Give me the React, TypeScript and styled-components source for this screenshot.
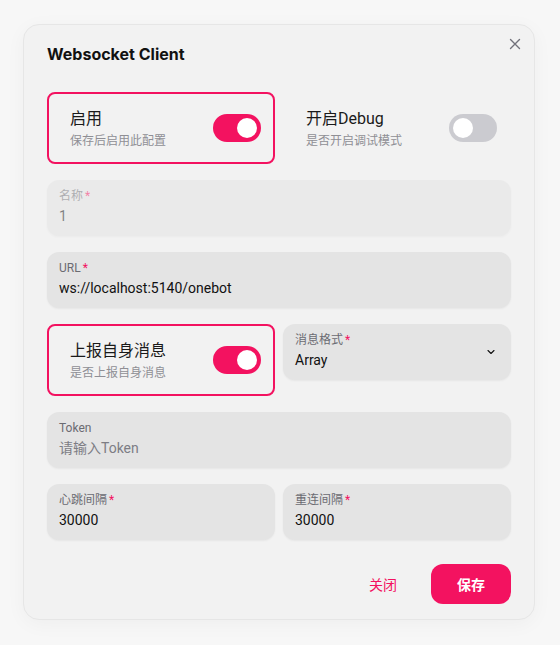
import React from 'react'
import styled, { createGlobalStyle } from 'styled-components'

const GlobalStyle = createGlobalStyle`
  body {
    margin: 0;
    background: #f7f7f7;
    font-family: Roboto, "Noto Sans CJK SC", sans-serif;
    color: #11181c;
  }
`

const Page = styled.div`
  display: flex;
  justify-content: center;
  align-items: flex-start;
  padding-top: 24px;
  min-height: 645px;
  box-sizing: border-box;
`

const Modal = styled.section`
  position: relative;
  width: 512px;
  background: #f2f2f2;
  border: 1px solid #e6e6e6;
  border-radius: 16px;
  box-shadow: 0 4px 20px rgba(0, 0, 0, 0.04);
  box-sizing: border-box;
  margin-left: -2px;
`

const Header = styled.header`
  padding: 15px 23px 16px;
  font-family: Inter, "Noto Sans CJK SC", sans-serif;
  font-size: 16px;
  line-height: 28px;
  font-weight: 700;
  color: #111;
`

const CloseButton = styled.button`
  position: absolute;
  top: 3px;
  right: 3px;
  width: 32px;
  height: 32px;
  display: flex;
  align-items: center;
  justify-content: center;
  border: none;
  background: transparent;
  color: #71717a;
  padding: 0;
`

const Body = styled.div`
  display: flex;
  flex-direction: column;
  gap: 16px;
  padding: 8px 23px;
`

const Row = styled.div`
  display: grid;
  grid-template-columns: 1fr 1fr;
  gap: 8px;
  align-items: start;
`

const SwitchCard = styled.div<{ $active?: boolean }>`
  display: flex;
  align-items: center;
  justify-content: space-between;
  height: 72px;
  box-sizing: border-box;
  padding: 0 12px 0 21px;
  border: 2px solid ${p => (p.$active ? '#f31260' : 'transparent')};
  border-radius: 8px;
`

const CardText = styled.div`
  display: flex;
  flex-direction: column;
  gap: 2px;
`

const CardTitle = styled.div`
  font-size: 16px;
  line-height: 24px;
  color: #1a1a1a;
`

const CardHint = styled.div`
  font-size: 12px;
  line-height: 16px;
  color: #8f8f95;
`

const Track = styled.div<{ $on?: boolean }>`
  width: 48px;
  height: 28px;
  border-radius: 14px;
  background: ${p => (p.$on ? '#f31260' : '#cbcbd0')};
  display: flex;
  align-items: center;
  justify-content: ${p => (p.$on ? 'flex-end' : 'flex-start')};
  padding: 0 4px;
  box-sizing: border-box;
`

const Thumb = styled.div`
  width: 20px;
  height: 20px;
  border-radius: 50%;
  background: #fff;
`

const Field = styled.div<{ $disabled?: boolean }>`
  position: relative;
  height: 56px;
  box-sizing: border-box;
  padding: 8px 12px 10px;
  display: flex;
  flex-direction: column;
  gap: 2px;
  border-radius: 12px;
  background: #e4e4e4;
  box-shadow: 0 1px 2px rgba(0, 0, 0, 0.05);
  opacity: ${p => (p.$disabled ? 0.5 : 1)};
`

const Label = styled.label`
  font-size: 12px;
  line-height: 16px;
  color: #6b6b72;
`

const Required = styled.span`
  color: #f31260;
  margin-left: 2px;
`

const Value = styled.div<{ $placeholder?: boolean }>`
  font-size: 14px;
  line-height: 20px;
  color: ${p => (p.$placeholder ? '#7d7d84' : '#111')};
`

const Chevron = styled.span`
  position: absolute;
  right: 14px;
  top: 50%;
  transform: translateY(-50%);
  display: flex;
  color: #111;
`

const Footer = styled.footer`
  display: flex;
  justify-content: flex-end;
  gap: 8px;
  padding: 16px 23px 15px;
`

const Button = styled.button<{ $solid?: boolean }>`
  min-width: 80px;
  height: 40px;
  border: none;
  border-radius: 12px;
  font-family: inherit;
  font-size: 14px;
  font-weight: ${p => (p.$solid ? 700 : 400)};
  background: ${p => (p.$solid ? '#f31260' : 'transparent')};
  color: ${p => (p.$solid ? '#fff' : '#f31260')};
`

const Toggle: React.FC<{ on?: boolean }> = ({ on }) => (
  <Track $on={on}>
    <Thumb />
  </Track>
)

interface InputProps {
  label: string
  value: string
  required?: boolean
  disabled?: boolean
  placeholder?: boolean
  select?: boolean
}

const Input: React.FC<InputProps> = props => (
  <Field $disabled={props.disabled}>
    <Label>
      {props.label}
      {props.required && <Required>*</Required>}
    </Label>
    <Value $placeholder={props.placeholder}>{props.value}</Value>
    {props.select && (
      <Chevron>
        <svg width="12" height="12" viewBox="0 0 24 24" fill="none" stroke="currentColor" strokeWidth="2.2" strokeLinecap="round" strokeLinejoin="round">
          <path d="m6 9 6 6 6-6" />
        </svg>
      </Chevron>
    )}
  </Field>
)

const App: React.FC = () => (
  <Page>
    <GlobalStyle />
    <Modal>
      <CloseButton aria-label="close">
        <svg width="12" height="12" viewBox="0 0 12 12" stroke="currentColor" strokeWidth="1.4" strokeLinecap="round">
          <path d="M1.5 1.5l9 9M10.5 1.5l-9 9" />
        </svg>
      </CloseButton>
      <Header>Websocket Client</Header>
      <Body>
        <Row>
          <SwitchCard $active>
            <CardText>
              <CardTitle>启用</CardTitle>
              <CardHint>保存后启用此配置</CardHint>
            </CardText>
            <Toggle on />
          </SwitchCard>
          <SwitchCard>
            <CardText>
              <CardTitle>开启Debug</CardTitle>
              <CardHint>是否开启调试模式</CardHint>
            </CardText>
            <Toggle />
          </SwitchCard>
        </Row>
        <Input label="名称" value="1" required disabled />
        <Input label="URL" value="ws://localhost:5140/onebot" required />
        <Row>
          <SwitchCard $active>
            <CardText>
              <CardTitle>上报自身消息</CardTitle>
              <CardHint>是否上报自身消息</CardHint>
            </CardText>
            <Toggle on />
          </SwitchCard>
          <Input label="消息格式" value="Array" required select />
        </Row>
        <Input label="Token" value="请输入Token" placeholder />
        <Row>
          <Input label="心跳间隔" value="30000" required />
          <Input label="重连间隔" value="30000" required />
        </Row>
      </Body>
      <Footer>
        <Button>关闭</Button>
        <Button $solid>保存</Button>
      </Footer>
    </Modal>
  </Page>
)

export default App
